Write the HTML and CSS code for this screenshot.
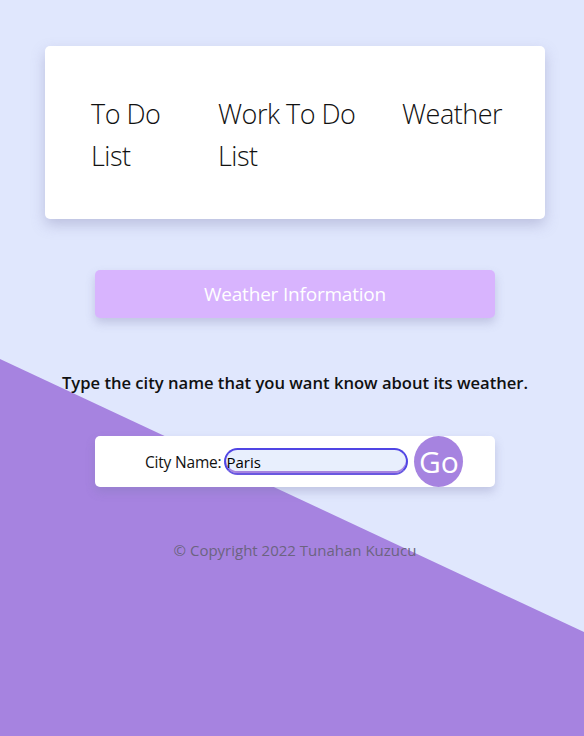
FILE: index.html
```html
<!DOCTYPE html>
<html lang="en">
<head>
<meta charset="utf-8">
<title>Weather</title>
<link rel="stylesheet" href="styles.css">
</head>
<body>
<div class="bg-shape"></div>
<main class="page">
  <nav class="nav-card">
    <ul class="nav-list">
      <li class="nav-item">To Do List</li>
      <li class="nav-item">Work To Do List</li>
      <li class="nav-item">Weather</li>
    </ul>
  </nav>
  <div class="title-btn">Weather Information</div>
  <p class="prompt">Type the city name that you want know about its weather.</p>
  <form class="city-form">
    <label class="city-label" for="city">City Name:</label>
    <input class="city-input" id="city" type="text" value="Paris">
    <button class="go-btn" type="button">Go</button>
  </form>
  <footer class="copyright">© Copyright 2022 Tunahan Kuzucu</footer>
</main>
</body>
</html>
```
FILE: styles.css
```css
html, body {
  margin: 0;
  padding: 0;
}
body {
  background: #e0e7fd;
  font-family: "Open Sans", "Noto Sans", sans-serif;
  min-height: 736px;
  position: relative;
  overflow: hidden;
}
.bg-shape {
  position: absolute;
  left: 0;
  top: 0;
  width: 584px;
  height: 736px;
  background: #a683e0;
  clip-path: polygon(0 359px, 100% 632px, 100% 100%, 0 100%);
  z-index: 0;
}
.page {
  position: relative;
  z-index: 1;
  width: 500px;
  margin-left: 45px;
  padding-top: 46px;
  display: flex;
  flex-direction: column;
  align-items: center;
}
.nav-card {
  width: 100%;
  box-sizing: border-box;
  background: #fff;
  border-radius: 5px;
  box-shadow: 0 6px 14px rgba(120, 120, 170, 0.35);
  padding: 47px 46px 42px;
}
.nav-list {
  list-style: none;
  margin: 0;
  padding: 0;
  display: grid;
  grid-template-columns: 127px 184px 1fr;
}
.nav-item {
  font-size: 27px;
  font-weight: 300;
  line-height: 42px;
  color: #111;
  padding-right: 22px;
  letter-spacing: -0.5px;
}
.title-btn {
  margin-top: 51px;
  width: 400px;
  height: 48px;
  box-sizing: border-box;
  background: #d8b4fe;
  border-radius: 5px;
  color: #fff;
  font-size: 19px;
  letter-spacing: -0.2px;
  display: flex;
  align-items: center;
  justify-content: center;
  box-shadow: 0 5px 10px rgba(120, 120, 170, 0.3);
}
.prompt {
  margin: 53px 0 0;
  font-size: 16.6px;
  line-height: 24px;
  font-weight: 600;
  color: #111;
  white-space: nowrap;
}
.city-form {
  margin-top: 41px;
  width: 400px;
  height: 51px;
  box-sizing: border-box;
  background: #fff;
  border-radius: 5px;
  box-shadow: 0 5px 10px rgba(120, 120, 170, 0.3);
  display: flex;
  align-items: center;
  padding-left: 50px;
}
.city-label {
  font-size: 15.5px;
  color: #111;
  margin-right: 3px;
  letter-spacing: -0.2px;
}
.city-input {
  width: 184px;
  height: 27px;
  box-sizing: border-box;
  border: 2px solid #5045e4;
  border-bottom-color: #6a58e0;
  border-radius: 14px;
  background: #e8effd;
  font-family: "Open Sans", sans-serif;
  font-size: 15px;
  color: #000;
  padding: 0;
  outline: none;
  box-shadow: inset 0 -2px 0 #a683e0;
}
.go-btn {
  margin-left: 6px;
  width: 49px;
  height: 51px;
  border-radius: 50%;
  border: none;
  background: #a683e0;
  color: #fff;
  font-family: "Open Sans", sans-serif;
  font-size: 30px;
  padding: 0;
  display: flex;
  align-items: center;
  justify-content: center;
}
.copyright {
  margin-top: 53px;
  font-size: 15px;
  color: #6c6380;
}
```
